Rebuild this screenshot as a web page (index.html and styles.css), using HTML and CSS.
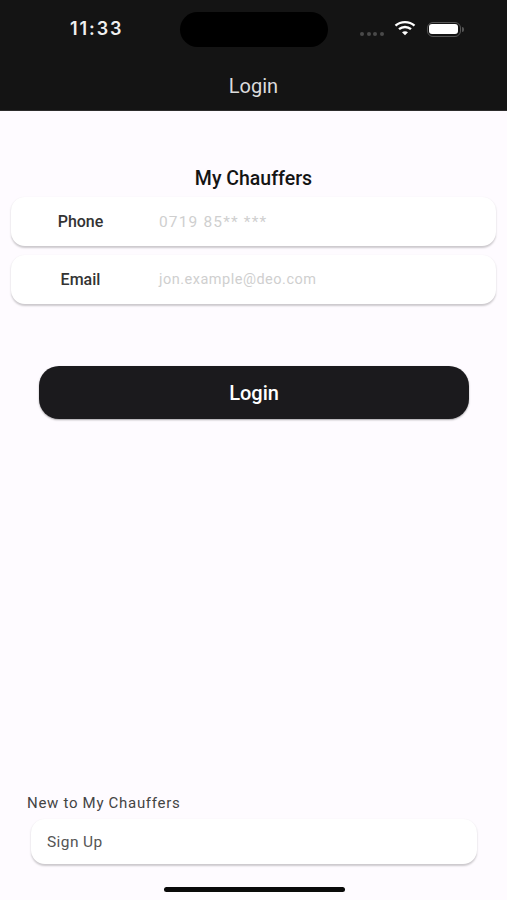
FILE: index.html
```html
<!DOCTYPE html>
<html lang="en">
<head>
<meta charset="utf-8">
<title>Login</title>
<link rel="stylesheet" href="styles.css">
</head>
<body>
<div class="screen">
  <header class="header">
    <div class="status">
      <span class="time">11:33</span>
      <span class="island"></span>
      <div class="status-icons">
        <span class="dots"><i></i><i></i><i></i><i></i></span>
        <svg class="wifi" width="22" height="16" viewBox="0 0 22 16"><path d="M1.500 5.600C6.800.9 15.200.9 20.500 5.600" fill="none" stroke="#fff" stroke-width="2.400"/><path d="M5 9.200c3.500-3 8.500-3 12 0" fill="none" stroke="#fff" stroke-width="2.400"/><path d="M8 12.300l3 3 3-3c-1.800-1.400-4.200-1.400-6 0z" fill="#fff"/></svg>
        <span class="battery"><span class="battery-fill"></span></span>
        <span class="battery-cap"></span>
      </div>
    </div>
    <div class="title">Login</div>
  </header>
  <main class="main">
    <h1 class="brand">My Chauffers</h1>
    <div class="fields">
      <div class="card field"><span class="label">Phone</span><span class="hint">0719 85** ***</span></div>
      <div class="card field"><span class="label">Email</span><span class="hint hint-email">jon.example@deo.com</span></div>
    </div>
    <button class="login" type="button">Login</button>
    <div class="signup">
      <p class="new">New to My Chauffers</p>
      <div class="card signup-card">Sign Up</div>
    </div>
    <div class="home"></div>
  </main>
</div>
</body>
</html>
```
FILE: styles.css
```css
* { box-sizing: border-box; }
html, body { margin: 0; padding: 0; }
body { font-family: Roboto, "Liberation Sans", sans-serif; background: #fefbff; }
.screen { width: 507px; height: 900px; display: flex; flex-direction: column; overflow: hidden; }
.header { height: 111px; flex: none; background: #141414; display: flex; flex-direction: column; border-bottom: 1px solid #2c2c2c; }
.status { height: 59px; padding: 12px 0 0 70px; display: flex; align-items: flex-start; }
.time { width: 110px; color: #f0f0f0; font: 600 18px/34px Inter, sans-serif; letter-spacing: 1.900px; }
.island { width: 148px; height: 35px; border-radius: 18px; background: #000; flex: none; }
.status-icons { display: flex; align-items: center; margin: 6px 0 0 32px; height: 22px; }
.dots { display: flex; gap: 2.500px; margin-top: 9px; }
.dots i { width: 4px; height: 4px; border-radius: 50%; background: #4a4a4a; }
.wifi { margin: -2px 0 0 10px; }
.battery { width: 34px; height: 15px; margin-left: 11px; border: 1.500px solid #555; border-radius: 6px; padding: 1.500px; display: flex; }
.battery-fill { flex: 1; background: #fff; border-radius: 3px; }
.battery-cap { width: 2px; height: 5px; background: #555; border-radius: 0 2px 2px 0; margin-left: 1px; }
.title { text-align: center; color: #dcdcdc; font-size: 20px; line-height: 24px; margin-top: 15px; }
.main { flex: 1; display: flex; flex-direction: column; position: relative; }
.brand { margin: 56px 0 0; text-align: center; font-size: 19.500px; line-height: 24px; font-weight: 500; color: #141414; }
.card { background: #fff; box-shadow: 0 1.500px 2px rgba(0,0,0,.2); }
.fields { display: flex; flex-direction: column; gap: 9px; margin: 6px 11px 0; }
.field { height: 49px; border-radius: 14px; display: flex; align-items: center; }
.label { width: 139px; text-align: center; font-size: 16px; font-weight: 500; color: #333; flex: none; margin-right: 9px; }
.hint { color: #cfcfcf; font-size: 15.500px; letter-spacing: 1.150px; }
.hint-email { font-size: 14.500px; letter-spacing: .5px; }
.login { display: block; width: 430px; height: 53px; margin: 62px 0 0 39px; border: 0; border-radius: 20px; background: #1b1a1d; color: #fff; font: 500 20px Roboto, sans-serif; box-shadow: 0 1px 2px rgba(0,0,0,.35); }
.signup { margin-top: auto; padding: 0 30px 0 27px; }
.new { margin: 0; font-size: 15px; line-height: 18px; letter-spacing: .7px; color: #444; }
.signup-card { width: 446px; height: 45px; margin: 7px 0 0 4px; border-radius: 14px; padding-left: 16px; display: flex; align-items: center; font-size: 15.500px; letter-spacing: .4px; color: #555; }
.home { width: 181px; height: 5px; background: #0a0a0a; border-radius: 3px; margin: 23px 0 8px 164px; }
```
